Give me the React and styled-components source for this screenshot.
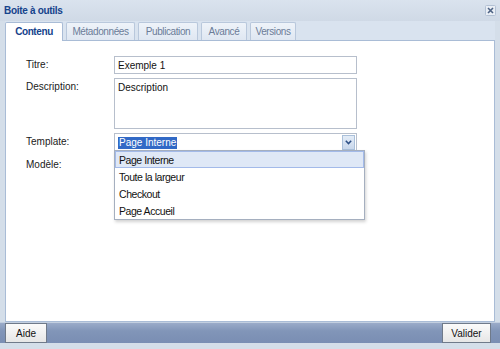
import React from "react";
import styled, { createGlobalStyle } from "styled-components";

const GlobalStyle = createGlobalStyle`
  body {
    margin: 0;
    background: #d4dee9;
    font-family: "Liberation Sans", Arial, sans-serif;
  }
`;

const Window = styled.div`
  width: 500px;
  height: 349px;
  display: flex;
  flex-direction: column;
  background: #d4dee9;
  overflow: hidden;
`;

const TitleBar = styled.div`
  height: 21px;
  flex: none;
  display: flex;
  align-items: center;
  justify-content: space-between;
  padding: 0 4px 0 4px;
  background: linear-gradient(#dae3ee, #cfd9e6);
`;

const Title = styled.span`
  font-size: 10px;
  font-weight: bold;
  letter-spacing: -0.3px;
  color: #15428b;
`;

const CloseIcon = styled.svg`
  display: block;
  margin-top: -1px;
`;

const Frame = styled.div`
  flex: 1;
  display: flex;
  flex-direction: column;
  padding: 0 5px;
  min-height: 0;
`;

const TabStrip = styled.div`
  height: 19px;
  flex: none;
  display: flex;
  align-items: flex-end;
  gap: 3px;
  border-bottom: 1px solid #a9bcd6;
  background: #d9e3ef;
`;

const Tab = styled.div`
  width: ${(p) => p.$w}px;
  height: ${(p) => (p.$active ? 19 : 18)}px;
  box-sizing: border-box;
  display: flex;
  align-items: center;
  justify-content: center;
  font-size: 10px;
  letter-spacing: -0.4px;
  font-weight: ${(p) => (p.$active ? "bold" : "normal")};
  color: ${(p) => (p.$active ? "#15428b" : "#6b7c98")};
  border: 1px solid ${(p) => (p.$active ? "#a9bcd6" : "#b9c8dc")};
  border-bottom: none;
  border-radius: 2px 2px 0 0;
  background: ${(p) =>
    p.$active ? "#fff" : "linear-gradient(#eef3f9, #dfe7f2)"};
  margin-bottom: ${(p) => (p.$active ? "-1px" : "0")};
  padding-bottom: ${(p) => (p.$active ? "1px" : "0")};
`;

const Body = styled.div`
  flex: 1;
  background: #fff;
  border: 1px solid #a9bcd6;
  border-top: none;
  padding: 15px 20px;
  min-height: 0;
`;

const Form = styled.div`
  display: grid;
  grid-template-columns: 88px 243px;
  row-gap: 4px;
  align-items: start;
`;

const Label = styled.label`
  font-size: 10px;
  line-height: 12px;
  color: #1a1a1a;
  padding-top: 3px;
`;

const Field = styled.div`
  height: ${(p) => p.$h}px;
  box-sizing: border-box;
  border: 1px solid #b7bfcc;
  background: #fff;
  font-size: 10px;
  color: #111;
  padding: ${(p) => (p.$multi ? "3px 3px" : "0 3px")};
  display: flex;
  align-items: ${(p) => (p.$multi ? "flex-start" : "center")};
`;

const SelectBox = styled.div`
  position: relative;
  height: 19px;
  box-sizing: border-box;
  border: 1px solid #b7bfcc;
  background: #fff;
  display: flex;
  align-items: center;
  justify-content: space-between;
  padding-left: 3px;
`;

const Selected = styled.span`
  font-size: 10px;
  line-height: 12px;
  background: #3169c6;
  color: #fff;
  padding: 0 1px;
`;

const Arrow = styled.div`
  width: 13px;
  height: 15px;
  margin-right: 1px;
  box-sizing: border-box;
  border: 1px solid #aac0da;
  background: linear-gradient(#e3ecf7, #c9d8ec);
  display: flex;
  align-items: center;
  justify-content: center;
`;

const List = styled.div`
  position: absolute;
  top: 16px;
  left: -1px;
  width: 251px;
  box-sizing: border-box;
  border: 1px solid #a5afbf;
  background: #fff;
  box-shadow: 1px 2px 3px rgba(0, 0, 0, 0.18);
  z-index: 2;
`;

const Item = styled.div`
  height: 17px;
  box-sizing: border-box;
  display: flex;
  align-items: center;
  padding-left: 3px;
  font-size: 10.5px;
  letter-spacing: -0.45px;
  color: #111;
  background: ${(p) => (p.$selected ? "#dfe8f6" : "#fff")};
  border: 1px solid ${(p) => (p.$selected ? "#a3bae9" : "transparent")};
`;

const Footer = styled.div`
  height: 21px;
  box-sizing: border-box;
  flex: none;
  display: flex;
  align-items: center;
  justify-content: space-between;
  padding: 0 9px 0 5px;
  background: linear-gradient(#9aabc9, #8195b8 40%, #7a8eb3);
  border-top: 1px solid #c3cfe0;
`;

const Button = styled.button`
  width: ${(p) => p.$w}px;
  height: 20px;
  box-sizing: border-box;
  border: 1px solid #6f7a8a;
  background: linear-gradient(#fbfbfb, #e6e6e6);
  font-family: inherit;
  font-size: 10px;
  color: #111;
  padding: 0;
`;

const BottomEdge = styled.div`
  height: 6px;
  flex: none;
`;

const tabs = [
  { label: "Contenu", w: 58, active: true },
  { label: "Métadonnées", w: 69 },
  { label: "Publication", w: 60 },
  { label: "Avancé", w: 46 },
  { label: "Versions", w: 46 },
];

const options = ["Page Interne", "Toute la largeur", "Checkout", "Page Accueil"];

export default function App() {
  return (
    <>
      <GlobalStyle />
      <Window>
        <TitleBar>
          <Title>Boite à outils</Title>
          <CloseIcon width="11" height="11" viewBox="0 0 11 11">
            <rect x="0.5" y="0.5" width="10" height="10" rx="1" fill="#e9eef5" stroke="#b3c1d4" />
            <path d="M3 3 L8 8 M8 3 L3 8" stroke="#4d6283" strokeWidth="1.6" />
          </CloseIcon>
        </TitleBar>
        <Frame>
          <TabStrip>
            {tabs.map((t) => (
              <Tab key={t.label} $w={t.w} $active={t.active}>
                {t.label}
              </Tab>
            ))}
          </TabStrip>
          <Body>
            <Form>
              <Label>Titre:</Label>
              <Field $h={18}>Exemple 1</Field>
              <Label>Description:</Label>
              <Field $h={51} $multi>
                Description
              </Field>
              <Label>Template:</Label>
              <SelectBox>
                <Selected>Page Interne</Selected>
                <Arrow>
                  <svg width="7" height="5" viewBox="0 0 7 5">
                    <path d="M0.8 0.8 L3.5 3.6 L6.2 0.8" fill="none" stroke="#2d4f86" strokeWidth="1.5" />
                  </svg>
                </Arrow>
                <List>
                  {options.map((o, i) => (
                    <Item key={o} $selected={i === 0}>
                      {o}
                    </Item>
                  ))}
                </List>
              </SelectBox>
              <Label>Modèle:</Label>
              <Field $h={18} />
            </Form>
          </Body>
        </Frame>
        <Footer>
          <Button $w={42}>Aide</Button>
          <Button $w={49}>Valider</Button>
        </Footer>
        <BottomEdge />
      </Window>
    </>
  );
}
